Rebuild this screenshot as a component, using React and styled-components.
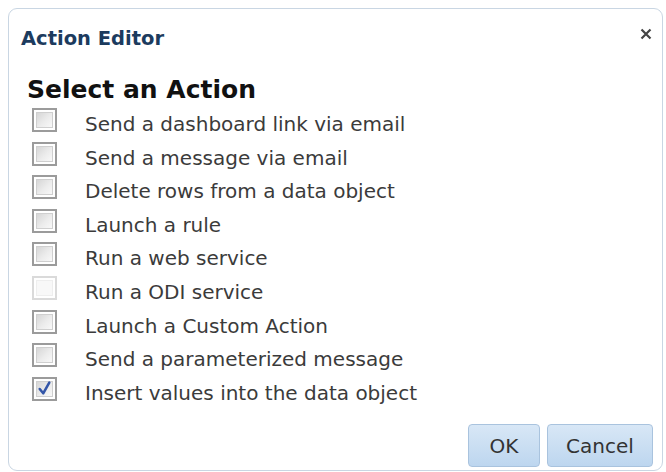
import React from 'react';
import styled, { createGlobalStyle } from 'styled-components';

const GlobalStyle = createGlobalStyle`
  html, body {
    margin: 0;
    padding: 0;
    background: #fff;
  }
`;

const Page = styled.div`
  padding: 8px 3px 0 8px;
  font-family: 'DejaVu Sans', Verdana, sans-serif;
`;

const Dialog = styled.div`
  height: 461px;
  border: 1px solid #c9d6e3;
  border-radius: 9px;
  background: #fff;
  display: flex;
  flex-direction: column;
`;

const TitleBar = styled.div`
  display: flex;
  align-items: center;
  justify-content: space-between;
  padding: 18px 9px 0 12px;
  height: 24px;
`;

const Title = styled.span`
  font-weight: bold;
  font-size: 19.5px;
  line-height: 24px;
  color: #1c3b5e;
`;

const Close = styled.button`
  border: none;
  background: none;
  padding: 0;
  width: 14px;
  height: 14px;
  margin-top: -10px;
  display: flex;
  align-items: center;
  justify-content: center;
  cursor: pointer;
`;

const Body = styled.div`
  padding: 24px 0 0 18px;
  display: flex;
  flex-direction: column;
`;

const Heading = styled.h2`
  margin: 0;
  font-size: 25px;
  font-weight: bold;
  color: #111;
  line-height: 30px;
`;

const List = styled.div`
  display: flex;
  flex-direction: column;
  padding: 3px 0 0 5px;
`;

const Row = styled.label`
  display: flex;
  align-items: flex-start;
  height: 33.6px;
  line-height: 33.6px;
  font-size: 20px;
  color: #3b3b3b;
`;

const BoxWrap = styled.span`
  position: relative;
  display: flex;
  margin-right: 28px;
  flex-shrink: 0;
`;

const Box = styled.span`
  width: 25px;
  height: 24px;
  box-sizing: border-box;
  border: 2px solid ${(p) => (p.$disabled ? '#dadada' : '#9b9b9b')};
  padding: 2px;
  display: flex;
  background: #fff;

  &::before {
    content: '';
    flex: 1;
    border: 1px solid ${(p) => (p.$disabled ? '#eeeeee' : '#cfcfcf')};
    background: ${(p) =>
      p.$disabled
        ? '#f8f8f8'
        : 'linear-gradient(135deg, #d6d6d6 0%, #ececec 55%, #f8f8f8 100%)'};
  }
`;

const Check = styled.svg`
  position: absolute;
  left: 4px;
  top: 3px;
`;

const Footer = styled.div`
  display: flex;
  justify-content: flex-end;
  gap: 7px;
  padding: 14px 9px 0 0;
`;

const Button = styled.button`
  height: 43px;
  width: ${(p) => p.$w}px;
  border: 1px solid #a9c3de;
  border-radius: 4px;
  background: linear-gradient(#d8e7f6, #bdd6ef);
  font-family: 'DejaVu Sans', Verdana, sans-serif;
  font-size: 20px;
  color: #333;
  cursor: pointer;
`;

const actions = [
  { label: 'Send a dashboard link via email' },
  { label: 'Send a message via email' },
  { label: 'Delete rows from a data object' },
  { label: 'Launch a rule' },
  { label: 'Run a web service' },
  { label: 'Run a ODI service', disabled: true },
  { label: 'Launch a Custom Action' },
  { label: 'Send a parameterized message' },
  { label: 'Insert values into the data object', checked: true },
];

export default function App() {
  return (
    <>
      <GlobalStyle />
      <Page>
        <Dialog>
          <TitleBar>
            <Title>Action Editor</Title>
            <Close aria-label="close">
              <svg width="12" height="12" viewBox="0 0 12 12">
                <path d="M1.5 1.5 L10.5 10.5 M10.5 1.5 L1.5 10.5" stroke="#444" strokeWidth="2.2" />
              </svg>
            </Close>
          </TitleBar>
          <Body>
            <Heading>Select an Action</Heading>
            <List>
              {actions.map((a) => (
                <Row key={a.label}>
                  <BoxWrap>
                    <Box $disabled={a.disabled} />
                    {a.checked && (
                      <Check width="17" height="17" viewBox="0 0 16 16">
                        <path
                          d="M3.5 8.5 L6.8 12.5 L12.5 2.5"
                          fill="none"
                          stroke="#3356a8"
                          strokeWidth="2.4"
                          strokeLinecap="round"
                          strokeLinejoin="round"
                        />
                      </Check>
                    )}
                  </BoxWrap>
                  <span>{a.label}</span>
                </Row>
              ))}
            </List>
            <Footer>
              <Button $w={72}>OK</Button>
              <Button $w={106}>Cancel</Button>
            </Footer>
          </Body>
        </Dialog>
      </Page>
    </>
  );
}
